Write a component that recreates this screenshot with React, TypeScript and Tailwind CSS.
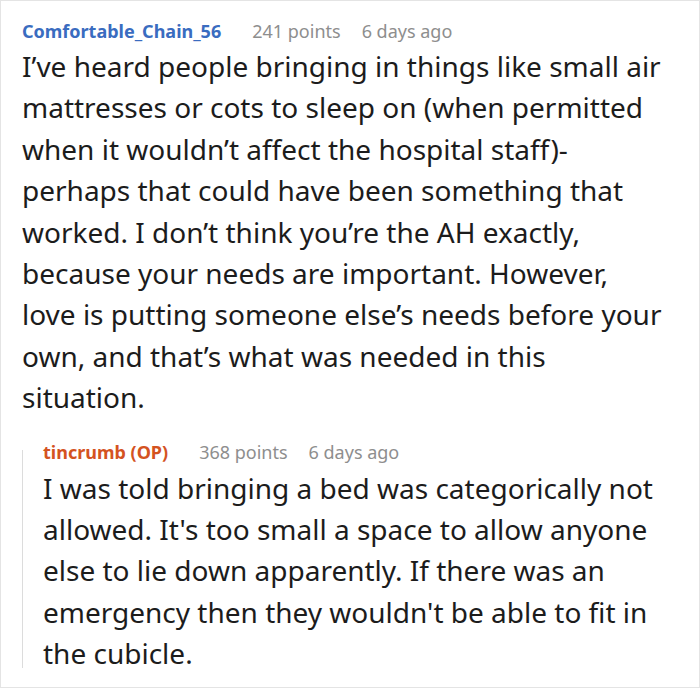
export default function App() {
  return (
    <div
      className="w-[700px] h-[688px] overflow-hidden border border-[#e4e4e4] bg-white pl-[21px] pr-[10px] pt-[18px]"
      style={{ fontFamily: '"Noto Sans", sans-serif' }}
    >
      {/* Parent comment */}
      <div className="flex items-center text-[18px] leading-[24px]">
        <span className="font-bold text-[#3a6cc0]">Comfortable_Chain_56</span>
        <span className="ml-[31px] text-[#8e8e8e]">241 points</span>
        <span className="ml-[21px] text-[#8e8e8e]">6 days ago</span>
      </div>
      <p className="mt-[3px] whitespace-nowrap text-[28px] leading-[41.4px] text-[#1c1c1c]">
        I’ve heard people bringing in things like small air
        <br />
        mattresses or cots to sleep on (when permitted
        <br />
        when it wouldn’t affect the hospital staff)-
        <br />
        perhaps that could have been something that
        <br />
        worked. I don’t think you’re the AH exactly,
        <br />
        because your needs are important. However,
        <br />
        love is putting someone else’s needs before your
        <br />
        own, and that’s what was needed in this
        <br />
        situation.
      </p>

      {/* Reply */}
      <div className="mt-[21px] flex">
        <div className="mt-[10px] mb-[7px] w-[1px] bg-[#dcdcdc]" />
        <div className="ml-[20px] flex-1">
          <div className="flex items-center text-[18px] leading-[24px]">
            <span className="font-bold text-[#d4531f]">tincrumb (OP)</span>
            <span className="ml-[31px] text-[#8e8e8e]">368 points</span>
            <span className="ml-[21px] text-[#8e8e8e]">6 days ago</span>
          </div>
          <p className="mt-[4px] whitespace-nowrap text-[28px] leading-[41.4px] text-[#1c1c1c]">
            I was told bringing a bed was categorically not
            <br />
            allowed. It's too small a space to allow anyone
            <br />
            else to lie down apparently. If there was an
            <br />
            emergency then they wouldn't be able to fit in
            <br />
            the cubicle.
          </p>
        </div>
      </div>
    </div>
  );
}
